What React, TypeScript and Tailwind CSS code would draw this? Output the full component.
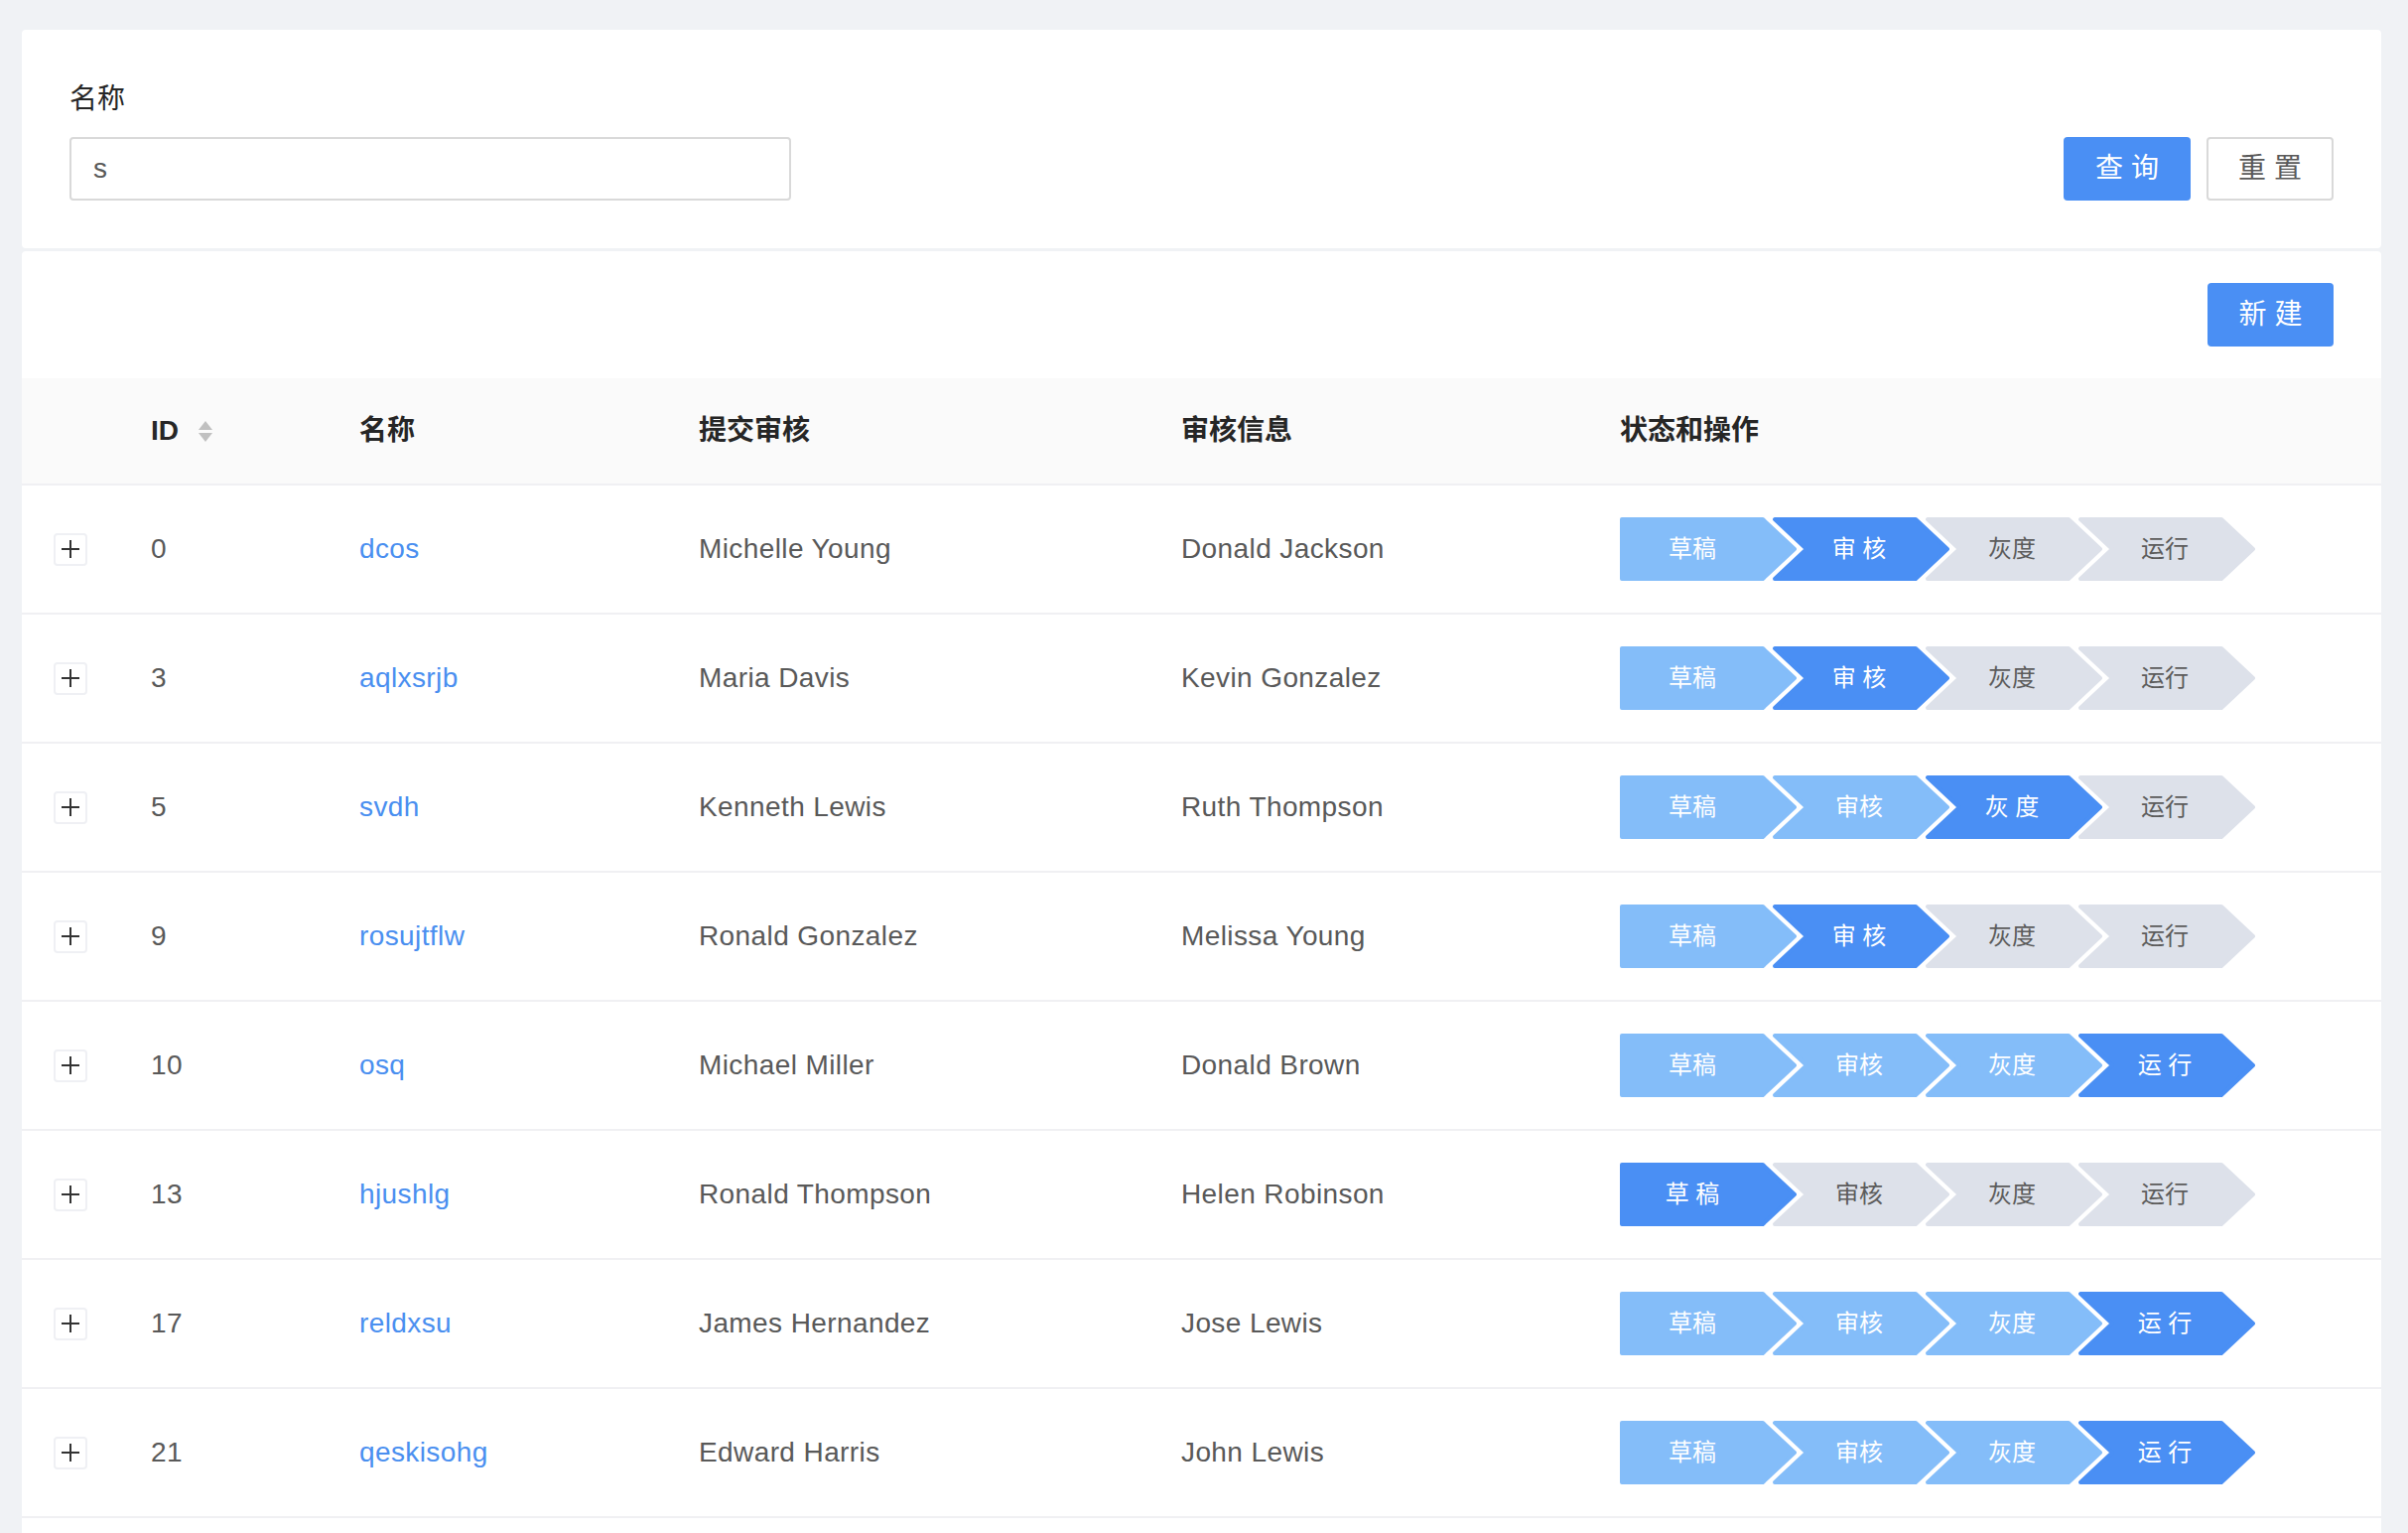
import React from 'react';

type Row = {
    id: number;
    name: string;
    submitter: string;
    reviewer: string;
    active: number;
};

const rows: Row[] = [
    {id: 0, name: 'dcos', submitter: 'Michelle Young', reviewer: 'Donald Jackson', active: 1},
    {id: 3, name: 'aqlxsrjb', submitter: 'Maria Davis', reviewer: 'Kevin Gonzalez', active: 1},
    {id: 5, name: 'svdh', submitter: 'Kenneth Lewis', reviewer: 'Ruth Thompson', active: 2},
    {id: 9, name: 'rosujtflw', submitter: 'Ronald Gonzalez', reviewer: 'Melissa Young', active: 1},
    {id: 10, name: 'osq', submitter: 'Michael Miller', reviewer: 'Donald Brown', active: 3},
    {id: 13, name: 'hjushlg', submitter: 'Ronald Thompson', reviewer: 'Helen Robinson', active: 0},
    {id: 17, name: 'reldxsu', submitter: 'James Hernandez', reviewer: 'Jose Lewis', active: 3},
    {id: 21, name: 'qeskisohg', submitter: 'Edward Harris', reviewer: 'John Lewis', active: 3},
];

const steps = ['草稿', '审核', '灰度', '运行'];

const FIRST = 'M2,2 L144,2 L176,32 L144,62 L2,62 Z';
const NOTCH = 'M2,2 L144,2 L176,32 L144,62 L2,62 L34,32 Z';

const grid = 'grid grid-cols-[98px_210px_342px_486px_442px_1fr] items-center';

function StepBar({active}: {active: number}) {
    return (
        <div className="flex h-[64px]">
            {steps.map((label, i) => {
                const state = i < active ? 'done' : i === active ? 'active' : 'wait';
                const shape =
                    state === 'done'
                        ? 'fill-[#84bdf9] stroke-[#84bdf9]'
                        : state === 'active'
                            ? 'fill-[#4a8ff4] stroke-[#4a8ff4]'
                            : 'fill-[#dde1ea] stroke-[#dde1ea]';
                return (
                    <div
                        key={label}
                        className={`relative flex h-[64px] w-[178px] shrink-0 items-center justify-center ${i === 0 ? 'pr-[32px]' : '-ml-[24px] pr-[4px]'}`}
                    >
                        <svg className="absolute inset-0" width="178" height="64" viewBox="0 0 178 64">
                            <path d={i === 0 ? FIRST : NOTCH} className={shape} strokeWidth="4" strokeLinejoin="round"/>
                        </svg>
                        <span
                            className={`relative text-[24px] leading-[32px] tracking-normal ${state === 'wait' ? 'text-[#5c5c5c]' : 'text-white'}`}
                        >
                            {state === 'active' ? label.split('').join(' ') : label}
                        </span>
                    </div>
                );
            })}
        </div>
    );
}

function ExpandButton() {
    return (
        <button className="flex h-[33px] w-[34px] items-center justify-center rounded-[4px] border-2 border-[#eff0f4] bg-white">
            <svg width="20" height="20" viewBox="0 0 20 20">
                <path d="M1,10 H19 M10,1 V19" stroke="#333" strokeWidth="2"/>
            </svg>
        </button>
    );
}

export default function App() {
    return (
        <div
            className="min-h-screen bg-[#f0f2f5] pt-[30px] pl-[22px] pr-[27px] text-[28px] text-[#595959]"
            style={{fontFamily: '"Liberation Sans", "Noto Sans CJK SC", sans-serif'}}
        >
            {/* search form */}
            <div className="flex items-end justify-between rounded-[4px] bg-white px-[48px] pt-[48px] pb-[48px]">
                <div>
                    <div className="mb-[16px] h-[44px] leading-[44px] text-[#262626]">名称</div>
                    <div className="flex h-[64px] w-[727px] items-center rounded-[4px] border-2 border-[#d9d9d9] px-[22px] text-[#595959]">
                        s
                    </div>
                </div>
                <div className="flex gap-[16px]">
                    <button className="h-[64px] w-[128px] rounded-[4px] bg-[#4a8ff4] text-white">查 询</button>
                    <button className="h-[64px] w-[128px] rounded-[4px] border-2 border-[#d9d9d9] bg-white text-[#595959]">
                        重 置
                    </button>
                </div>
            </div>

            {/* table */}
            <div className="mt-[3px] rounded-t-[4px] bg-white pt-[32px] pb-[40px]">
                <div className="mb-[32px] flex justify-end pr-[48px]">
                    <button className="h-[64px] w-[127px] rounded-[4px] bg-[#4a8ff4] text-white">新 建</button>
                </div>

                <div className={`${grid} h-[108px] border-b-2 border-[#f0f0f3] bg-[#fafafa] font-semibold text-[#262626]`}>
                    <div/>
                    <div className="flex items-center px-[32px]">
                        <span>ID</span>
                        <span className="ml-[20px] flex flex-col gap-[3px]">
                            <svg width="14" height="9" viewBox="0 0 14 9">
                                <path d="M7,0 L14,9 L0,9 Z" fill="#c0c0c0"/>
                            </svg>
                            <svg width="14" height="9" viewBox="0 0 14 9">
                                <path d="M0,0 L14,0 L7,9 Z" fill="#c0c0c0"/>
                            </svg>
                        </span>
                    </div>
                    <div className="px-[32px]">名称</div>
                    <div className="px-[32px]">提交审核</div>
                    <div className="px-[32px]">审核信息</div>
                    <div className="px-[32px]">状态和操作</div>
                </div>

                {rows.map((row) => (
                    <div key={row.id} className={`${grid} h-[130px] border-b-2 border-[#f0f0f3] tracking-[0.4px]`}>
                        <div className="pl-[32px]">
                            <ExpandButton/>
                        </div>
                        <div className="px-[32px]">{row.id}</div>
                        <div className="px-[32px]">
                            <a className="text-[#4a8ff0]">{row.name}</a>
                        </div>
                        <div className="px-[32px]">{row.submitter}</div>
                        <div className="px-[32px]">{row.reviewer}</div>
                        <div className="px-[32px]">
                            <StepBar active={row.active}/>
                        </div>
                    </div>
                ))}
            </div>
        </div>
    );
}
